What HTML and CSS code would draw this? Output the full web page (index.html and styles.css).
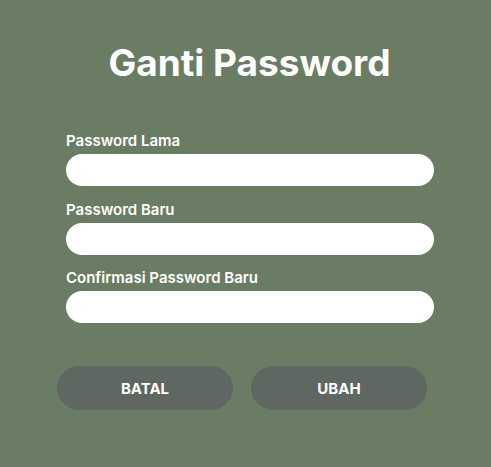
FILE: index.html
```html
<!DOCTYPE html>
<html lang="id">
<head>
<meta charset="utf-8">
<title>Ganti Password</title>
<link rel="stylesheet" href="styles.css">
</head>
<body>
<main class="page">
  <h1 class="title">Ganti Password</h1>
  <form class="form">
    <div class="field">
      <label class="label" for="old">Password Lama</label>
      <input class="input" id="old" type="password">
    </div>
    <div class="field">
      <label class="label" for="new">Password Baru</label>
      <input class="input" id="new" type="password">
    </div>
    <div class="field">
      <label class="label" for="confirm">Confirmasi Password Baru</label>
      <input class="input" id="confirm" type="password">
    </div>
  </form>
  <div class="actions">
    <button class="btn" type="button">BATAL</button>
    <button class="btn" type="button">UBAH</button>
  </div>
</main>
</body>
</html>
```
FILE: styles.css
```css
html, body {
  margin: 0;
  padding: 0;
}
body {
  background: #6b7c64;
  font-family: Inter, "Liberation Sans", sans-serif;
  color: #ffffff;
  width: 491px;
  height: 467px;
  overflow: hidden;
}
.page {
  padding-top: 41px;
}
.title {
  margin: 0;
  font-size: 37px;
  line-height: 44px;
  font-weight: 700;
  text-align: center;
  padding-left: 8px;
}
.form {
  margin: 47px 57px 0 66px;
  display: flex;
  flex-direction: column;
  gap: 14.5px;
}
.field {
  display: flex;
  flex-direction: column;
}
.label {
  font-size: 15px;
  line-height: 18px;
  font-weight: 600;
  margin-bottom: 4px;
}
.input {
  height: 32px;
  border: none;
  border-radius: 16px;
  background: #ffffff;
  padding: 0 14px;
  box-sizing: border-box;
  outline: none;
}
.actions {
  display: flex;
  gap: 18px;
  margin: 43px 0 0 57px;
}
.btn {
  width: 176px;
  height: 44px;
  border: none;
  border-radius: 22px;
  background: #5e6762;
  color: #ffffff;
  font-family: Inter, "Liberation Sans", sans-serif;
  font-size: 15px;
  font-weight: 700;
  cursor: pointer;
}
```
